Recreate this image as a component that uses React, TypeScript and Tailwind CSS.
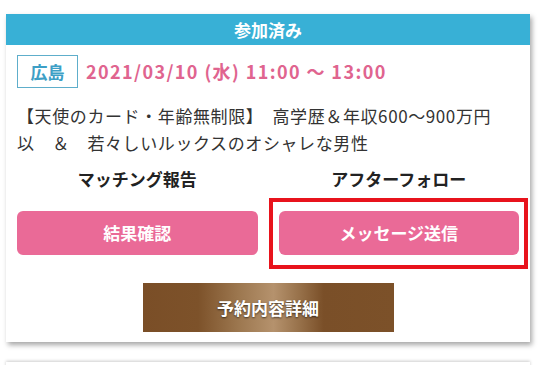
import React from "react";

const font = { fontFamily: '"Noto Sans CJK JP", "Noto Sans", sans-serif' };

export default function App() {
  return (
    <div className="min-h-[365px] w-[542px] overflow-hidden bg-white pt-[14px] pl-[6px]" style={font}>
      <div className="w-[524px] bg-white shadow-[2px_3px_5px_rgba(0,0,0,0.35)]">
        <div className="flex h-[31px] items-center justify-center bg-[#38b0d6] text-[17px] font-bold text-white">
          参加済み
        </div>
        <div className="px-[11px] pt-[10px] pb-[10px]">
          <div className="flex items-center">
            <div className="flex h-[33px] w-[61px] items-center justify-center border border-[#5eaecb] text-[17px] font-bold text-[#3d9fc6]">
              広島
            </div>
            <div className="ml-[8px] text-[18px] font-bold tracking-[1.4px] text-[#e0648f]">
              2021/03/10 (水) 11:00 ～ 13:00
            </div>
          </div>
          <p className="mt-[14px] text-[17px] leading-[27px] tracking-[0.6px] text-[#333333]">
            【天使のカード・年齢無制限】　高学歴＆年収600～900万円
            <br />
            以　＆　若々しいルックスのオシャレな男性
          </p>
          <div className="mt-[11px] grid grid-cols-2 gap-x-[21px]">
            <div className="flex h-[24px] items-center justify-center text-[17px] font-bold text-[#222222]">
              マッチング報告
            </div>
            <div className="flex h-[24px] items-center justify-center text-[17px] font-bold text-[#222222]">
              アフターフォロー
            </div>
            <button className="mt-[20px] flex h-[44px] items-center justify-center rounded-[6px] bg-[#ea6a97] text-[17px] font-bold text-white">
              結果確認
            </button>
            <div className="relative mt-[20px]">
              <button className="flex h-[44px] w-full items-center justify-center rounded-[6px] bg-[#ea6a97] text-[17px] font-bold text-white">
                メッセージ送信
              </button>
              <div className="pointer-events-none absolute -top-[13px] -bottom-[14px] -left-[10px] -right-[9px] border-[4px] border-[#e8131c]" />
            </div>
          </div>
          <div className="mt-[28px] flex justify-center">
            <button className="flex h-[49px] w-[251px] items-center justify-center bg-[linear-gradient(to_right,#7a4e27_0%,#7d522a_22%,#9c774f_38%,#b5926d_52%,#98724b_62%,#7a4f28_72%,#7c5129_100%)] text-[17px] font-bold text-white [text-shadow:0_1px_2px_rgba(0,0,0,0.6)]">
              予約内容詳細
            </button>
          </div>
        </div>
      </div>
      <div className="mt-[20px] h-[20px] w-[524px] bg-white shadow-[0_-1px_3px_rgba(0,0,0,0.2)]" />
    </div>
  );
}
